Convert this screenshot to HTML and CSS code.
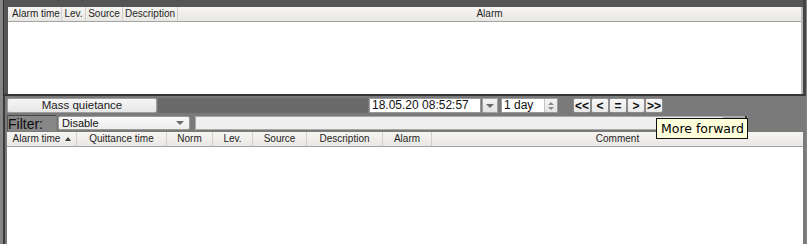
FILE: index.html
```html
<!DOCTYPE html>
<html lang="en">
<head>
    <meta charset="UTF-8">
    <title>Alarm journal</title>
    <link rel="stylesheet" href="styles.css">
</head>
<body>
    <div class="window">
        <div class="alarms-pane">
            <div class="grid top-grid">
                <div class="grid-head top-head">
                    <div class="col">Alarm time</div>
                    <div class="col">Lev.</div>
                    <div class="col">Source</div>
                    <div class="col">Description</div>
                    <div class="col">Alarm</div>
                </div>
            </div>
        </div>

        <div class="journal-pane">
            <div class="toolbar">
                <button class="mass-btn">Mass quietance</button>
                <div class="toolbar-gap"></div>
                <div class="date-box">18.05.20 08:52:57</div>
                <div class="drop-btn"><span class="arrow-down"></span></div>
                <div class="spin-box">
                    <span class="spin-text">1 day</span>
                    <div class="spin-arrows">
                        <span class="arrow-up small"></span>
                        <span class="arrow-down small"></span>
                    </div>
                </div>
                <div class="nav">
                    <button class="nav-btn">&lt;&lt;</button>
                    <button class="nav-btn">&lt;</button>
                    <button class="nav-btn">=</button>
                    <button class="nav-btn">&gt;</button>
                    <button class="nav-btn">&gt;&gt;</button>
                </div>
            </div>

            <div class="filter-row">
                <label class="filter-label">Filter:</label>
                <div class="combo">
                    <span>Disable</span>
                    <span class="arrow-down"></span>
                </div>
                <div class="filter-field">
                    <span class="field-btn"></span>
                </div>
            </div>

            <div class="grid bottom-grid">
                <div class="grid-head bottom-head">
                    <div class="col sorted">Alarm time<span class="sort-arrow"></span></div>
                    <div class="col">Quittance time</div>
                    <div class="col">Norm</div>
                    <div class="col">Lev.</div>
                    <div class="col">Source</div>
                    <div class="col">Description</div>
                    <div class="col">Alarm</div>
                    <div class="col">Comment</div>
                </div>
            </div>

            <div class="tooltip">More forward</div>
        </div>
    </div>
</body>
</html>
```

FILE: styles.css
```css
body {
    margin: 0;
    font-family: "Liberation Sans", Arial, sans-serif;
    background: #7a7a7a;
}

.window {
    width: 807px;
    height: 244px;
    box-sizing: border-box;
    display: flex;
    flex-direction: column;
    border-left: 3px solid #858585;
    border-right: 1px solid #858585;
    position: relative;
    overflow: hidden;
}

/* upper pane: active alarms */
.alarms-pane {
    height: 96px;
    box-sizing: border-box;
    background: #555;
    border-left: 1px solid #2e2e2e;
    border-right: 3px solid #444;
    border-bottom: 2px solid #363636;
    padding: 7px 0 0 4px;
}

.grid {
    background: #fff;
    display: flex;
    flex-direction: column;
}

.top-grid {
    height: 87px;
    border-right: 2px solid #b9b9b9;
}

.grid-head {
    display: grid;
    height: 15px;
    box-sizing: border-box;
    background: linear-gradient(#f7f5f2, #e9e7e3);
    border-bottom: 1px solid #a3a3a3;
    font-size: 10px;
    color: #1e1e1e;
}

.top-head {
    grid-template-columns: 54px 24px 37px 55px 1fr;
}

.top-head .col:first-child {
    padding-left: 3px;
}

.bottom-head {
    grid-template-columns: 70px 90px 46px 40px 54px 76px 49px 1fr;
}

.col {
    border-right: 1px solid #d2d0cc;
    text-align: center;
    line-height: 14px;
    white-space: nowrap;
    overflow: hidden;
}

.col:last-child {
    border-right: none;
}

.col.sorted {
    position: relative;
    padding-right: 10px;
}

.sort-arrow {
    position: absolute;
    right: 5px;
    top: 5px;
    width: 0;
    height: 0;
    border-left: 3px solid transparent;
    border-right: 3px solid transparent;
    border-bottom: 4px solid #3c3c3c;
}

/* lower pane: journal */
.journal-pane {
    flex: 1;
    display: flex;
    flex-direction: column;
    background: #7a7a7a;
    border-left: 2px solid #3a3a3a;
    padding: 2px 3px 0 2px;
}

.toolbar {
    display: flex;
    height: 15px;
    align-items: stretch;
}

.mass-btn {
    width: 150px;
    margin: 0;
    padding: 0;
    font-family: "Liberation Sans", Arial, sans-serif;
    font-size: 11.5px;
    color: #1c1c1c;
    background: linear-gradient(#f6f6f6, #e6e6e6);
    border: 1px solid #9c9c9c;
    border-radius: 2px;
    line-height: 13px;
}

.toolbar-gap {
    width: 210px;
    background: #6a6a6a;
    margin-left: 1px;
}

.date-box {
    width: 112px;
    margin-left: 1px;
    box-sizing: border-box;
    background: #fff;
    border: 1px solid #9a9a9a;
    font-size: 12px;
    line-height: 13px;
    padding-left: 2px;
    color: #111;
}

.drop-btn {
    width: 16px;
    margin-left: 1px;
    background: linear-gradient(#f2f2f2, #e2e2e2);
    border: 1px solid #a0a0a0;
    box-sizing: border-box;
    display: flex;
    align-items: center;
    justify-content: center;
}

.arrow-down {
    width: 0;
    height: 0;
    border-left: 4px solid transparent;
    border-right: 4px solid transparent;
    border-top: 4px solid #6a6a6a;
}

.arrow-up {
    width: 0;
    height: 0;
    border-left: 4px solid transparent;
    border-right: 4px solid transparent;
    border-bottom: 4px solid #6a6a6a;
}

.arrow-up.small,
.arrow-down.small {
    border-left-width: 3px;
    border-right-width: 3px;
    border-top-width: 3px;
    border-bottom-width: 3px;
}

.arrow-up.small { border-top: none; border-bottom-color: #8a8a8a; }
.arrow-down.small { border-bottom: none; border-top-color: #8a8a8a; }

.spin-box {
    width: 57px;
    margin-left: 3px;
    box-sizing: border-box;
    background: #fff;
    border: 1px solid #9a9a9a;
    display: flex;
    justify-content: space-between;
}

.spin-text {
    font-size: 12px;
    line-height: 13px;
    padding-left: 2px;
    color: #111;
}

.spin-arrows {
    width: 12px;
    background: linear-gradient(#f4f4f4, #e4e4e4);
    border-left: 1px solid #c4c4c4;
    display: flex;
    flex-direction: column;
    align-items: center;
    justify-content: center;
    gap: 2px;
}

.nav {
    display: flex;
    margin-left: 15px;
}

.nav-btn {
    width: 18px;
    margin: 0;
    padding: 0;
    font-family: "Liberation Sans", Arial, sans-serif;
    font-size: 12px;
    font-weight: bold;
    line-height: 12px;
    color: #111;
    background: linear-gradient(#f7f7f7, #e8e8e8);
    border: 1px solid #8c8c8c;
    border-radius: 2px;
}

.filter-row {
    display: flex;
    height: 16px;
    margin-top: 2px;
    align-items: center;
}

.filter-label {
    width: 49px;
    height: 16px;
    box-sizing: border-box;
    border-top: 1px solid #474747;
    border-left: 1px solid #555;
    background: #878787;
    font-size: 14px;
    line-height: 16px;
    color: #0e0e0e;
}

.combo {
    width: 132px;
    height: 14px;
    margin-left: 2px;
    box-sizing: border-box;
    background: linear-gradient(#fafafa, #ededed);
    border: 1px solid #9a9a9a;
    border-radius: 2px;
    display: flex;
    align-items: center;
    justify-content: space-between;
    padding: 0 5px 0 3px;
    font-size: 11px;
    color: #111;
}

.filter-field {
    flex: 1;
    height: 14px;
    margin: 0 55px 0 5px;
    box-sizing: border-box;
    background: #efefef;
    border: 1px solid #a8a8a8;
    position: relative;
}

.field-btn {
    position: absolute;
    right: 0;
    top: -1px;
    width: 22px;
    height: 14px;
    background: #a9a9a9;
    border-right: 2px solid #333;
}

.bottom-grid {
    flex: 1;
    margin-top: 1px;
}

.tooltip {
    position: absolute;
    left: 653px;
    top: 118px;
    width: 92px;
    height: 21px;
    box-sizing: border-box;
    background: #ffffdc;
    border: 1px solid #111;
    font-family: "DejaVu Sans", sans-serif;
    font-size: 12.5px;
    line-height: 19px;
    padding-left: 4px;
    color: #000;
    white-space: nowrap;
}
```
